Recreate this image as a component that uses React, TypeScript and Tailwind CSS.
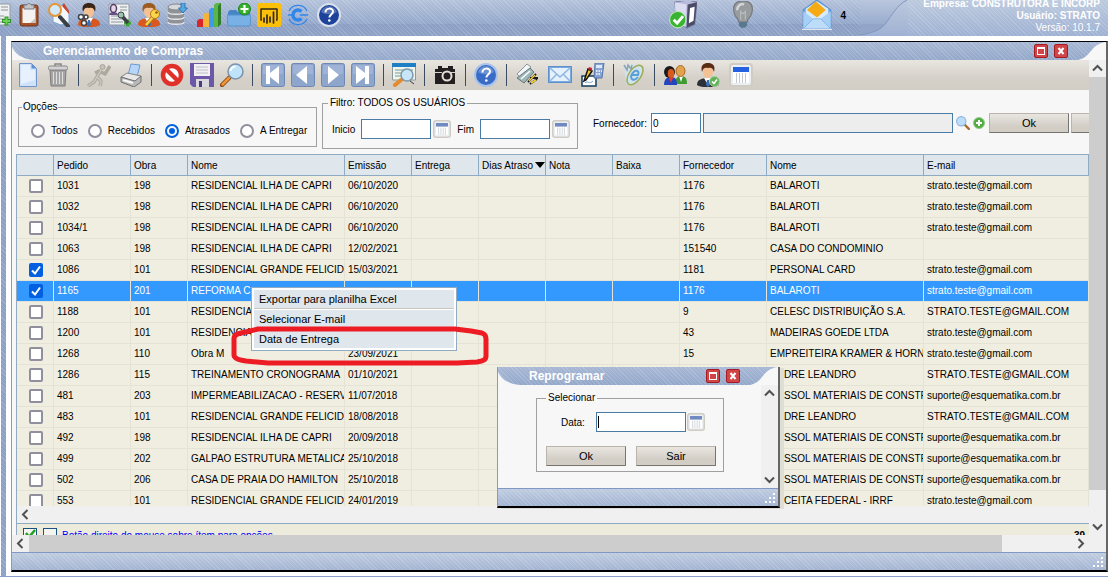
import type { ReactNode } from 'react';

const STRIPES =
  'bg-[repeating-linear-gradient(45deg,rgba(255,255,255,0.14)_0px,rgba(255,255,255,0.14)_1px,transparent_1px,transparent_3px)]';

interface IconProps {
  children: ReactNode;
  className?: string;
}

function Icon({ children, className = 'size-6' }: IconProps) {
  return (
    <svg viewBox="0 0 24 24" className={`block shrink-0 ${className}`} aria-hidden="true">
      {children}
    </svg>
  );
}

/* ---------- small pieces shared by several icons ---------- */

function Lens() {
  return (
    <>
      <path d="M9 15L2 22" stroke="#8a4a1c" strokeWidth="4.5" strokeLinecap="round" />
      <path d="M9 15L2.5 21.5" stroke="#f0953a" strokeWidth="2.5" strokeLinecap="round" />
      <circle cx="15.500" cy="8.500" r="7.500" fill="#bfe3f8" stroke="#7b93ad" strokeWidth="1.500" />
      <path d="M10.500 8a5 5 0 0 1 5-4.500" stroke="#fff" strokeWidth="2" fill="none" />
    </>
  );
}

function Person({ body = '#d9581f', hair = '#3a2418' }: { body?: string; hair?: string }) {
  return (
    <>
      <path d="M1 22c0-5 4-7 11-7s11 2 11 7c-4 3-18 3-22 0z" fill={body} />
      <path d="M8 15l4 7 4-7z" fill="#fff" />
      <path d="M11 17h2l1 5-2 2-2-2z" fill="#3b6fb5" />
      <ellipse cx="12" cy="8.500" rx="5" ry="6.500" fill="#f3c193" />
      <path d="M6 9C4 2 8 0 12 0s8 2 6 9c-1-4-3-5-6-4-3-1-5 0-6 4z" fill={hair} />
    </>
  );
}

function Page() {
  return (
    <>
      <path d="M2 1h20v21H2z" fill="#eff0f0" stroke="#8f9aa5" />
      <path d="M13 4h7M13 7h7M4 13h12M4 16h12M4 19h12" stroke="#8d969e" />
    </>
  );
}

function HelpIcon({ fill, ring }: { fill: string; ring: string }) {
  return (
    <Icon>
      <circle cx="12" cy="12" r="11" fill={fill} stroke={ring} strokeWidth="2" />
      <path d="M4 9a8.500 8.500 0 0 1 16 0c-4 3-12 3-16 0z" fill="#fff" opacity=".25" />
      <path d="M8.500 9.500c0-5 7.500-5 7.500-1 0 3-3.600 3-3.600 6" stroke="#fff" strokeWidth="2" fill="none" />
      <circle cx="12.300" cy="17.500" r="1.300" fill="#fff" />
    </Icon>
  );
}

function NavIcon({ d }: { d: string }) {
  return (
    <Icon>
      <rect x=".5" y=".5" width="23" height="23" rx="2" fill="#8ea6cc" stroke="#6d88b5" />
      <rect x="2" y="2" width="20" height="9" fill="#a9bcda" opacity=".6" />
      <path d={d} fill="#fff" />
    </Icon>
  );
}

function CalendarIcon({ blue = '#7089c0' }: { blue?: string }) {
  return (
    <Icon className="size-full">
      <rect x="1" y="1" width="22" height="22" rx="3" fill="#eceff2" stroke="#cfccc4" strokeWidth="2" />
      <rect x="4" y="4" width="16" height="5" fill={blue} />
      <path d="M4 9h16v11H4z" fill="#fff" />
      <path d="M7.500 10v10M10.500 10v10M13.500 10v10M16.500 10v10" stroke="#c3c9d2" />
    </Icon>
  );
}

/* ---------- top bar ---------- */

const topIcons: { name: string; icon: ReactNode }[] = [
  {
    name: 'Área de transferência',
    icon: (
      <Icon>
        <rect x="3" y="2" width="18" height="21" rx="2" fill="#a5532a" stroke="#71351a" />
        <path d="M5.500 5h13v15h-13z" fill="#f5f3f0" />
        <path d="M13 20l5.500-5v5z" fill="#c9c4bd" />
        <path d="M7 2h3c0-2 4-2 4 0h3v4H7z" fill="#c3c6c9" stroke="#777c82" />
      </Icon>
    ),
  },
  {
    name: 'Consultar obra',
    icon: (
      <Icon>
        <path d="M6 12L16 1l6 7v12l-8 2-8-3z" fill="#f4f8fc" stroke="#7aa5d4" />
        <path d="M15 3l2-3 5 8v3z" fill="#c8452f" />
        <path d="M13 14l8 9" stroke="#3a3f45" strokeWidth="4" strokeLinecap="round" />
        <circle cx="8" cy="7" r="6" fill="#cfe9fa" stroke="#e69538" strokeWidth="2" />
      </Icon>
    ),
  },
  {
    name: 'Configurar usuário',
    icon: (
      <Icon>
        <Person />
        <circle cx="4" cy="14" r="2.500" fill="#fff" stroke="#40444a" strokeWidth="1.500" />
        <circle cx="9" cy="14" r="2" fill="#fff" stroke="#40444a" strokeWidth="1.500" />
        <circle cx="7" cy="20" r="2.500" fill="#fff" stroke="#40444a" strokeWidth="1.500" />
      </Icon>
    ),
  },
  {
    name: 'Permissões',
    icon: (
      <Icon>
        <Page />
        <path d="M2 12c0-4 9-4 9 0z" fill="#6e4e8c" />
        <ellipse cx="6.500" cy="5.500" rx="3" ry="4" fill="#ead5e8" stroke="#514061" strokeWidth="1.500" />
        <path d="M17 20h7M20.500 16.500v7" stroke="#3fa535" strokeWidth="3" />
        <path d="M15 13l6 7" stroke="#3c4146" strokeWidth="3.500" />
        <circle cx="14" cy="12" r="3" fill="#9ec3ad" stroke="#3c4146" />
      </Icon>
    ),
  },
  {
    name: 'Senha',
    icon: (
      <Icon>
        <Person hair="#9b5a20" />
        <path d="M17 13l-8 9" stroke="#b87a10" strokeWidth="4" />
        <path d="M17 13l-8 9" stroke="#fbd44d" strokeWidth="2" />
        <circle cx="18" cy="11" r="4.500" fill="#fbd44d" stroke="#b87a10" />
        <circle cx="19.500" cy="9.500" r="1.300" fill="#8f600c" />
      </Icon>
    ),
  },
  {
    name: 'Banco de dados',
    icon: (
      <Icon>
        <path d="M1 4v15c0 4 16 4 16 0V4z" fill="#8f9296" />
        <path d="M1 9c0 3 16 3 16 0M1 14c0 3 16 3 16 0M1 19c0 3 16 3 16 0" stroke="#e7e8e9" strokeWidth="1.500" fill="none" />
        <ellipse cx="9" cy="4" rx="8" ry="3" fill="#d6d8da" stroke="#85888c" />
        <path d="M14 0h4v5h2.500L16 10l-4.500-5H14z" fill="#58a6e0" stroke="#2c78b8" />
      </Icon>
    ),
  },
  {
    name: 'Gráficos',
    icon: (
      <Icon>
        <path d="M0 18l2-2h5v8H0z" fill="#d9262c" />
        <path d="M6 12l2-2h5v14H6z" fill="#f6b23a" />
        <path d="M12 7l2-2h4v19h-6z" fill="#3f9be8" />
        <path d="M17 2l2-2h5v21l-3 3h-4z" fill="#5cb548" />
        <path d="M21 3l3-3v21l-3 3z" fill="#2f7d2a" />
      </Icon>
    ),
  },
  {
    name: 'Nova pasta',
    icon: (
      <Icon>
        <path d="M1 9l2-2h6l2 2h12v13H1z" fill="#4686c5" />
        <path d="M0 12h24l-1 11H1z" fill="#79b1e6" stroke="#5593ce" />
        <circle cx="17.500" cy="6" r="6" fill="#35b02c" stroke="#1f8220" />
        <path d="M13.500 6h8M17.500 2v8" stroke="#fff" strokeWidth="2.200" />
      </Icon>
    ),
  },
  {
    name: 'Power BI',
    icon: (
      <Icon>
        <rect width="24" height="24" rx="2" fill="#fcc00a" />
        <path d="M5 17H4V6h16v11h-1" fill="none" stroke="#2f2a1d" strokeWidth="1.500" strokeLinejoin="round" />
        <path d="M7 15v4M10 12v8M13 14v5M16.500 9v11" stroke="#2f2a1d" strokeWidth="1.700" strokeLinecap="round" />
      </Icon>
    ),
  },
  {
    name: 'Conexão',
    icon: (
      <Icon>
        <path d="M2 8a10 10 0 0 1 18 0M20 16a10 10 0 0 1-18 0" fill="none" stroke="#2f86ec" strokeWidth="1.200" />
        <path d="M14.500 8.500a5 5 0 1 0 0 7" fill="none" stroke="#2f86ec" strokeWidth="3.500" />
        <path d="M1 12h4M13 12h8" stroke="#2f86ec" strokeWidth="1.500" />
      </Icon>
    ),
  },
  { name: 'Ajuda', icon: <HelpIcon fill="#1c429a" ring="#dbe1ec" /> },
];

function TopBar() {
  return (
    <header className="flex h-9 shrink-0 overflow-hidden bg-[linear-gradient(#bccade,#9fb1d3)]">
      <div className="flex-1 bg-[linear-gradient(#b4c2da_0px,#93a7cb_24px,#8b9fc4_24px,#8ea2c6_36px)]">
        <div className={`flex h-full items-start pt-[3px] ${STRIPES}`}>
          <button aria-label="Novo documento" className="w-[11px] overflow-hidden">
            <Icon className="-ml-3 size-6">
              <Page />
              <path d="M14 18h9M18.500 13.500v9" stroke="#2f9330" strokeWidth="4" />
              <path d="M15 18h7M18.500 14.500v7" stroke="#71cf58" strokeWidth="2" />
            </Icon>
          </button>
          <div className="ml-1.5 flex flex-1 gap-1.5">
            {topIcons.map((item) => (
              <button key={item.name} aria-label={item.name}>
                {item.icon}
              </button>
            ))}
          </div>
          <div className="-mt-[3px] flex items-center">
            <button aria-label="Servidor" className="mr-8">
              <Icon className="size-7">
                <path d="M5 1l11-2 8 2-2 19-6 3-9-3z" fill="#b9bade" stroke="#7e80a6" />
                <path d="M5 1l10 2-1 19-8-3z" fill="#dcdcf1" />
                <path d="M16 3l8-2-2 19-7 3z" fill="#4b4d67" />
                <path d="M18 6l4-1-1 12-4 2z" fill="#fff" />
                <circle cx="7.500" cy="16" r="7" fill="#39b431" stroke="#b9e3b4" />
                <path d="M4 16l3 3 5-6" fill="none" stroke="#fff" strokeWidth="2.500" />
              </Icon>
            </button>
            <button aria-label="Dicas" className="mr-[45px]">
              <Icon className="size-7">
                <path d="M12 0c11 0 9 11 4 16v2H8v-2C3 11 1 0 12 0z" fill="#999c9f" stroke="#75797d" />
                <path d="M7 8c0-4 3-6 6-5" stroke="#d5d7d9" strokeWidth="2" fill="none" />
                <path d="M10 16V9l2 2 2-2v7" stroke="#b9bcbf" fill="none" />
                <path d="M8.500 18h7v3l-2 2h-3l-2-2z" fill="#57788d" />
              </Icon>
            </button>
            <button aria-label="Mensagens" className="flex items-center gap-2 font-bold">
              <Icon className="size-[30px]">
                <path d="M1 8l11-8 11 8v15H1z" fill="#74a9e3" stroke="#5a92d4" />
                <path d="M3 7l9-6 9 6v6l-9 4-9-4z" fill="#d9ebfa" />
                <path d="M4 8l7-7 8 7-7 6z" fill="#f6ab14" />
                <path d="M1 9l8 6-8 8zM23 9l-8 6 8 8z" fill="#a5cff6" />
                <path d="M1 23l8-8h6l8 8z" fill="#bcdcf8" stroke="#71a8e2" strokeWidth=".5" />
                <path d="M0 23.500h24" stroke="#e3e6ec" />
              </Icon>
              4
            </button>
            <span className="w-3.5" />
          </div>
        </div>
      </div>
      <svg viewBox="0 0 48 36" className="block h-9 w-12 shrink-0" aria-hidden="true">
        <defs>
          <linearGradient id="bar" x1="0" y1="0" x2="0" y2="1">
            <stop offset="0" stopColor="#bac6dd" />
            <stop offset=".66" stopColor="#9aadcf" />
            <stop offset=".67" stopColor="#91a5c8" />
            <stop offset="1" stopColor="#94a7ca" />
          </linearGradient>
        </defs>
        <path d="M0 36V0h47C37 5 32 15 26 23 20 31 11 33 0 35z" fill="url(#bar)" />
        <path d="M47 0C37 5 32 15 26 23 20 31 11 33 0 35" fill="none" stroke="#7f97c0" />
      </svg>
      <div className={`w-[200px] text-right text-white ${STRIPES}`}>
        <p className="-mt-0.5 pr-2 leading-3 font-bold whitespace-nowrap">Empresa: CONSTRUTORA E INCORP</p>
        <p className="pr-2 leading-3 font-bold">Usuário: STRATO</p>
        <p className="pr-2 leading-3">Versão: 10.1.7</p>
      </div>
    </header>
  );
}

/* ---------- window toolbar ---------- */

function Separator() {
  return <span className="mx-2 h-[22px] w-px bg-[#3b4a63]" />;
}

function Tool({ name, children }: { name: string; children: ReactNode }) {
  return (
    <button aria-label={name} className="size-6 shrink-0">
      {children}
    </button>
  );
}

function Toolbar() {
  return (
    <div className="flex h-[30px] shrink-0 items-center overflow-hidden bg-[linear-gradient(#e9e6e1,#d5d0c8_60%,#d2cdc5)] pl-1">
      <div className="flex gap-1.5">
        <Tool name="Novo">
          <Icon>
            <path d="M3.500.5h12l5 5v18h-17z" fill="#cfe2fa" stroke="#6f95cc" />
            <path d="M5 2h9v5h5v10L5 21z" fill="#e7f1fd" />
            <path d="M15.500.5v5h5z" fill="#5f8fd2" />
          </Icon>
        </Tool>
        <Tool name="Excluir">
          <Icon>
            <path d="M4 7h16l-1 16H5z" fill="#a5a5a5" stroke="#7c7c7c" />
            <path d="M7.500 9v12M10.500 9v12M13.500 9v12M16.500 9v12" stroke="#dedede" />
            <rect x="2.500" y="3" width="19" height="4" rx="1.500" fill="#d3d3d3" stroke="#888" />
            <path d="M9 3V1h6v2" fill="none" stroke="#888" strokeWidth="1.500" />
          </Icon>
        </Tool>
      </div>
      <Separator />
      <div className="flex gap-2">
        <Tool name="Executar">
          <Icon>
            <circle cx="15.500" cy="4" r="2.500" fill="#c6c1ba" stroke="#a8a39b" />
            <path d="M14 7l-4 7 4 4-1 5M10 14l-3 5-6 4M8 10l4-2 6 3 5-8" fill="none" stroke="#aea99f" strokeWidth="3.500" strokeLinejoin="round" />
            <path d="M14 7l-4 7 4 4-1 5M10 14l-3 5-6 4" fill="none" stroke="#cbc6bd" strokeWidth="1.500" />
          </Icon>
        </Tool>
        <Tool name="Imprimir">
          <Icon>
            <path d="M9 12L12 1l9 1-3 12z" fill="#b6d5f7" stroke="#6d9ad2" />
            <path d="M2 14l6-4 14 3-3 7z" fill="#e8e8e8" stroke="#848484" />
            <path d="M2 14l14 4 6-5v6l-7 5-13-5z" fill="#b9b9b9" stroke="#707070" />
            <path d="M4 17l10 3" stroke="#f8f8f8" strokeWidth="2" />
          </Icon>
        </Tool>
      </div>
      <Separator />
      <div className="flex gap-1.5">
        <Tool name="Cancelar">
          <Icon>
            <circle cx="12" cy="12" r="9" fill="#fff" stroke="#df3029" strokeWidth="4.500" />
            <path d="M6 6l12 12" stroke="#df3029" strokeWidth="4.500" />
          </Icon>
        </Tool>
        <Tool name="Salvar">
          <Icon>
            <path d="M0 0h24v24H3l-3-3z" fill="#6d58a8" />
            <path d="M4 1h16v12H4z" fill="#f1f1f4" />
            <path d="M6 4h12M6 7h12M6 10h12" stroke="#bcbcc6" />
            <path d="M6 16h13v8H6z" fill="#d8d8de" />
            <path d="M9 18h3v6H9z" fill="#4c3a82" />
          </Icon>
        </Tool>
        <Tool name="Pesquisar">
          <Icon>
            <Lens />
          </Icon>
        </Tool>
      </div>
      <Separator />
      <div className="flex gap-1.5">
        <Tool name="Primeiro">
          <NavIcon d="M5 3h4v7l9-7v18l-9-7v7H5z" />
        </Tool>
        <Tool name="Anterior">
          <NavIcon d="M16 3v18L5 12z" />
        </Tool>
        <Tool name="Próximo">
          <NavIcon d="M7 3v18l11-9z" />
        </Tool>
        <Tool name="Último">
          <NavIcon d="M5 3l9 7V3h4v18h-4v-7l-9 7z" />
        </Tool>
      </div>
      <Separator />
      <Tool name="Visualizar">
        <Icon>
          <path d="M.5 1h23v16H.5z" fill="#eef5ee" stroke="#8b9a98" />
          <path d="M0 0h24v4H0z" fill="#1f7fc4" />
          <path d="M3 7h18M3 10h18M3 13h18" stroke="#7a9a91" />
          <path d="M9 17l-6 5" stroke="#e58a2c" strokeWidth="4" strokeLinecap="round" />
          <circle cx="15" cy="12" r="6" fill="#c8e6f7" stroke="#7c98aa" strokeWidth="1.500" />
          <path d="M18 18l4 3" stroke="#2b3f4c" />
        </Icon>
      </Tool>
      <Separator />
      <Tool name="Câmera">
        <Icon>
          <path d="M2 6h3V3h4v2h6V3h5v3h2v15H2z" fill="#231f20" />
          <path d="M2 9.500h7M17 9.500h5" stroke="#d8d3cb" />
          <circle cx="14" cy="13" r="4.500" fill="#231f20" stroke="#e4dfd8" strokeWidth="2" />
        </Icon>
      </Tool>
      <Separator />
      <Tool name="Ajuda da tela">
        <HelpIcon fill="#386cc6" ring="#a9c3ea" />
      </Tool>
      <Separator />
      <div className="flex gap-[9px]">
        <Tool name="Digitalizar">
          <Icon>
            <path d="M2 11L12 1l4 3L6 15z" fill="#f2f6f7" stroke="#8d9799" />
            <path d="M2 15l13-10 4 4-10 11z" fill="#9fb6b8" stroke="#66777a" />
            <path d="M6 16l9-8" stroke="#fff" strokeWidth="1.500" />
            <path d="M13 19l8-8M15 15h8M15 21l7-5" stroke="#1b1b1b" strokeWidth="2" />
            <path d="M14 18l6-6M16 20l5-3" stroke="#f2cf32" strokeWidth="1.500" />
          </Icon>
        </Tool>
        <Tool name="E-mail">
          <Icon>
            <rect x=".5" y="3.500" width="23" height="16" fill="#7dabe0" stroke="#5d8fcf" />
            <path d="M2 5h20v13H2z" fill="#e4f1fc" />
            <path d="M2 5l10 9 10-9M2 18l7-7M22 18l-7-7" fill="none" stroke="#90b5e0" strokeWidth="1.500" />
          </Icon>
        </Tool>
        <Tool name="Calcular">
          <Icon>
            <path d="M1 13h14v10H1z" fill="#fff" stroke="#123c5c" strokeWidth="1.500" />
            <path d="M4 20c3-3 4 2 8-2" stroke="#78a2c6" fill="none" />
            <path d="M14 0h9l-2 15h-8z" fill="#87a4d3" stroke="#5874a8" />
            <path d="M15 2h6v3h-6z" fill="#dcebfa" />
            <path d="M15 8h6M15 11h5" stroke="#fff" strokeWidth="1.500" strokeDasharray="1.500 1" />
            <path d="M3 18L7 6l4 2-6 9z" fill="#f3c92d" stroke="#111" strokeWidth="1.500" />
            <path d="M7 6l1-2 3 1v3z" fill="#c9252c" />
          </Icon>
        </Tool>
      </div>
      <Separator />
      <Tool name="Nota fiscal eletrônica">
        <Icon>
          <path d="M2 3l9-2 12 4-6 11-9 7-4-3z" fill="#d0e2ed" />
          <path d="M2 2l3 5 1-5 3 4 1-4" fill="none" stroke="#8fa3ad" strokeWidth="1.500" />
          <path d="M16 14c-4 5-9 2-6-3s8-4 6 1h-6" fill="none" stroke="#5aa0d8" strokeWidth="2" />
          <ellipse cx="13" cy="12" rx="6" ry="11" transform="rotate(35 13 12)" fill="none" stroke="#9bad55" strokeWidth="1.500" />
        </Icon>
      </Tool>
      <Separator />
      <div className="flex gap-[9px]">
        <Tool name="Usuários">
          <Icon>
            <path d="M12 21c0-5 2-8 6-8s6 2 6 8z" fill="#3e9b32" />
            <path d="M16 13l2 6 2-6z" fill="#fff" />
            <ellipse cx="17.500" cy="8" rx="4.500" ry="5.500" fill="#e3a24f" stroke="#a9691f" />
            <path d="M1 22c0-6 3-8 7-8s6 2 6 8z" fill="#2545c0" />
            <path d="M6 15l2 5 2-5z" fill="#e63a2f" />
            <ellipse cx="6.500" cy="9" rx="5.500" ry="6" fill="#1c1a1a" />
            <ellipse cx="8" cy="10.500" rx="3.300" ry="4.500" fill="#dc5a1b" />
          </Icon>
        </Tool>
        <Tool name="Aprovador">
          <Icon>
            <Person body="#2c3038" hair="#5a2c15" />
            <circle cx="18.500" cy="18.500" r="5" fill="#62b156" stroke="#a7d3a0" />
            <path d="M16 18.500l2 2 3-4" stroke="#fff" strokeWidth="1.500" fill="none" />
          </Icon>
        </Tool>
        <Tool name="Agenda">
          <CalendarIcon blue="#2460e0" />
        </Tool>
      </div>
    </div>
  );
}

/* ---------- window chrome ---------- */

function TitleBar({ title }: { title: string }) {
  return (
    <div className="shrink-0 bg-[linear-gradient(#a7b7d4,#93a8ca)]">
      <div className={`flex h-[18px] items-center ${STRIPES}`}>
        <svg viewBox="0 0 31 18" className="block h-full w-[31px] shrink-0" aria-hidden="true">
          <path d="M0 5c3 6 9 12 22 13H0z" fill="#f7f7f7" />
        </svg>
        <h2 className="flex-1 text-xs font-bold text-white">{title}</h2>
        <button aria-label="Maximizar" className="mr-1.5 grid size-3.5 place-items-center rounded-xs border border-[#a51b1f] bg-[#cf4548]">
          <span className="h-2 w-2 border border-t-2 border-white" />
        </button>
        <button aria-label="Fechar" className="mr-2.5 grid size-3.5 place-items-center rounded-xs border border-[#a51b1f] bg-[#cf4548]">
          <svg viewBox="0 0 8 8" className="block size-2" aria-hidden="true">
            <path d="M1.500 1l5 6M6.500 1l-5 6" stroke="#fff" strokeWidth="2" />
          </svg>
        </button>
        <svg viewBox="0 0 28 18" className="block h-full w-7 shrink-0" aria-hidden="true">
          <path d="M28 0C12 2 14 15 0 18h28z" fill="#f7f7f7" />
        </svg>
      </div>
    </div>
  );
}

function StatusBar() {
  return (
    <div className="shrink-0 border-t border-[#7f98c4] bg-[linear-gradient(#bfcce0,#a3b4d2)]">
      <div className={`flex h-[17px] items-end justify-end p-0.5 ${STRIPES}`}>
        <svg viewBox="0 0 11 11" className="block size-[11px]" aria-hidden="true">
          <path d="M8 0h2v2H8zM4 4h2v2H4zM8 4h2v2H8zM0 8h2v2H0zM4 8h2v2H4zM8 8h2v2H8z" fill="#fff" />
        </svg>
      </div>
    </div>
  );
}

const arrowPaths = {
  up: 'M4 10.500l4.500-4.500 4.500 4.500',
  down: 'M4 6.500l4.500 4.500 4.500-4.500',
  left: 'M10.500 4L6 8.500l4.500 4.500',
  right: 'M6.500 4l4.500 4.500L6.500 13',
};

function Arrow({ dir }: { dir: keyof typeof arrowPaths }) {
  return (
    <button aria-label={dir} className="size-[17px] shrink-0 bg-[#f0f0f0]">
      <svg viewBox="0 0 17 17" className="block size-full" aria-hidden="true">
        <path d={arrowPaths[dir]} fill="none" stroke="#505050" strokeWidth="2" />
      </svg>
    </button>
  );
}

/* ---------- filters ---------- */

const options = ['Todos', 'Recebidos', 'Atrasados', 'A Entregar'];

function DateField({ id, label }: { id: string; label: string }) {
  return (
    <>
      <label htmlFor={id}>{label}</label>
      <input id={id} type="text" className="ml-1.5 h-5 w-[70px] shrink-0 border border-[#4a7ba5] bg-white px-0.5" />
      <button aria-label={`Calendário ${label}`} className="ml-0.5 size-[18px] shrink-0">
        <CalendarIcon />
      </button>
    </>
  );
}

const buttonStyle =
  'h-5 border border-[#b9b5ad] border-r-[#77746f] border-b-[#77746f] bg-[linear-gradient(#e9e6e1,#d2cdc5_70%)] text-[11px] leading-none';

function Filters() {
  return (
    <div className="flex shrink-0 items-start overflow-hidden pt-1.5 pb-[5px] pl-1.5">
      <fieldset className="mt-1 h-[47px] w-[299px] min-w-0 shrink-0 border border-[#a0a0a0] pl-3">
        <legend className="-ml-[9px] px-px leading-[14px]">Opções</legend>
        <div className="flex items-center gap-2.5 pt-[9px]">
          {options.map((option) => (
            <label key={option} className="flex items-center gap-1.5 whitespace-nowrap">
              <input
                type="radio"
                name="opcoes"
                defaultChecked={option === 'Atrasados'}
                className="size-3.5 appearance-none rounded-full border-2 border-[#8f8f9d] bg-white checked:border-[#0060df] checked:bg-[#0060df] checked:bg-clip-content checked:p-0.5"
              />
              {option}
            </label>
          ))}
        </div>
      </fieldset>
      <fieldset className="ml-[5px] h-[53px] w-[256px] min-w-0 shrink-0 border border-[#a0a0a0] pl-[9px]">
        <legend className="-ml-1 px-0.5 leading-[14px]">Filtro: TODOS OS USUÁRIOS</legend>
        <div className="flex items-center pt-[9px]">
          <DateField id="inicio" label="Inicio" />
          <span className="w-1.5" />
          <DateField id="fim" label="Fim" />
        </div>
      </fieldset>
      <div className="mt-[17px] ml-[15px] flex flex-1 items-center">
        <label htmlFor="fornecedor">Fornecedor:</label>
        <input id="fornecedor" type="text" defaultValue="0" className="ml-1 h-5 w-[50px] shrink-0 border border-[#4a7ba5] bg-white px-px" />
        <input type="text" readOnly aria-label="Nome do fornecedor" className="ml-0.5 h-5 w-[250px] min-w-0 border border-[#4a7ba5] bg-[#ededed]" />
        <button aria-label="Buscar fornecedor" className="ml-[3px]">
          <Icon className="size-3.5">
            <path d="M15 15l7 7" stroke="#a96a2b" strokeWidth="4" strokeLinecap="round" />
            <circle cx="9" cy="9" r="8" fill="#bcdcf8" stroke="#8fb7e6" strokeWidth="2" />
          </Icon>
        </button>
        <button aria-label="Adicionar fornecedor" className="ml-[3px]">
          <Icon className="size-3">
            <circle cx="12" cy="12" r="11" fill="#4fad3f" stroke="#96c98c" strokeWidth="2" />
            <path d="M6 12h12M12 6v12" stroke="#fff" strokeWidth="4" />
          </Icon>
        </button>
        <button className={`ml-1 w-20 shrink-0 ${buttonStyle}`}>Ok</button>
        <button aria-label="Sair" className={`ml-0.5 w-20 shrink-0 ${buttonStyle}`} />
      </div>
    </div>
  );
}

/* ---------- grid ---------- */

interface Order {
  pedido: string;
  obra: string;
  nome: string;
  emissao: string;
  fornecedor: string;
  fornecedorNome: string;
  email: string;
  checked?: boolean;
  selected?: boolean;
}

const CAPRI = 'RESIDENCIAL ILHA DE CAPRI';
const GRANDE = 'RESIDENCIAL GRANDE FELICIDADE';
const CASSOL = 'CASSOL MATERIAIS DE CONSTRUCAO';
const GMAIL = 'strato.teste@gmail.com';
const SUPORTE = 'suporte@esquematika.com.br';

const orders: Order[] = [
  { pedido: '1031', obra: '198', nome: CAPRI, emissao: '06/10/2020', fornecedor: '1176', fornecedorNome: 'BALAROTI', email: GMAIL },
  { pedido: '1032', obra: '198', nome: CAPRI, emissao: '06/10/2020', fornecedor: '1176', fornecedorNome: 'BALAROTI', email: GMAIL },
  { pedido: '1034/1', obra: '198', nome: CAPRI, emissao: '06/10/2020', fornecedor: '1176', fornecedorNome: 'BALAROTI', email: GMAIL },
  { pedido: '1063', obra: '198', nome: CAPRI, emissao: '12/02/2021', fornecedor: '151540', fornecedorNome: 'CASA DO CONDOMINIO', email: '' },
  { pedido: '1086', obra: '101', nome: GRANDE, emissao: '15/03/2021', fornecedor: '1181', fornecedorNome: 'PERSONAL CARD', email: GMAIL, checked: true },
  { pedido: '1165', obra: '201', nome: 'REFORMA C', emissao: '', fornecedor: '1176', fornecedorNome: 'BALAROTI', email: GMAIL, checked: true, selected: true },
  { pedido: '1188', obra: '101', nome: 'RESIDENCIAL', emissao: '', fornecedor: '9', fornecedorNome: 'CELESC DISTRIBUIÇÃO S.A.', email: 'STRATO.TESTE@GMAIL.COM' },
  { pedido: '1200', obra: '101', nome: 'RESIDENCIAL', emissao: '', fornecedor: '43', fornecedorNome: 'MADEIRAS GOEDE LTDA', email: GMAIL },
  { pedido: '1268', obra: '110', nome: 'Obra M', emissao: '23/09/2021', fornecedor: '15', fornecedorNome: 'EMPREITEIRA KRAMER & HORN', email: GMAIL },
  { pedido: '1286', obra: '115', nome: 'TREINAMENTO CRONOGRAMA', emissao: '01/10/2021', fornecedor: '', fornecedorNome: 'ANDRE LEANDRO', email: 'STRATO.TESTE@GMAIL.COM' },
  { pedido: '481', obra: '203', nome: 'IMPERMEABILIZACAO - RESERVATORIO', emissao: '11/07/2018', fornecedor: '', fornecedorNome: CASSOL, email: SUPORTE },
  { pedido: '483', obra: '101', nome: GRANDE, emissao: '18/08/2018', fornecedor: '', fornecedorNome: 'ANDRE LEANDRO', email: 'STRATO.TESTE@GMAIL.COM' },
  { pedido: '492', obra: '198', nome: CAPRI, emissao: '20/09/2018', fornecedor: '', fornecedorNome: CASSOL, email: SUPORTE },
  { pedido: '499', obra: '202', nome: 'GALPAO ESTRUTURA METALICA', emissao: '25/10/2018', fornecedor: '', fornecedorNome: CASSOL, email: SUPORTE },
  { pedido: '502', obra: '206', nome: 'CASA DE PRAIA DO HAMILTON', emissao: '25/10/2018', fornecedor: '', fornecedorNome: CASSOL, email: SUPORTE },
  { pedido: '553', obra: '101', nome: GRANDE, emissao: '24/01/2019', fornecedor: '', fornecedorNome: 'RECEITA FEDERAL - IRRF', email: GMAIL },
];

const columns = [
  { title: 'Pedido', width: 'w-[77px]' },
  { title: 'Obra', width: 'w-[57px]' },
  { title: 'Nome', width: 'w-[157px]' },
  { title: 'Emissão', width: 'w-[67px]' },
  { title: 'Entrega', width: 'w-[67px]' },
  { title: 'Dias Atraso', width: 'w-[67px]', sorted: true },
  { title: 'Nota', width: 'w-[67px]' },
  { title: 'Baixa', width: 'w-[67px]' },
  { title: 'Fornecedor', width: 'w-[87px]' },
  { title: 'Nome', width: 'w-[157px]' },
  { title: 'E-mail', width: '' },
];

function OrderRow({ order }: { order: Order }) {
  const cells = [
    order.pedido,
    order.obra,
    order.nome,
    order.emissao,
    '',
    '',
    '',
    '',
    order.fornecedor,
    order.fornecedorNome,
    order.email,
  ];
  return (
    <tr className={order.selected ? 'h-[21px] bg-[#3399ff] text-white' : 'h-[21px] bg-[#f0eee1]'}>
      <td className="border-r border-b border-[#e5e3d6] p-0">
        <span className="relative ml-3 block size-3.5">
          <input
            type="checkbox"
            aria-label={`Pedido ${order.pedido}`}
            defaultChecked={order.checked}
            className="peer block size-3.5 appearance-none rounded-xs border-2 border-[#8f8f9d] bg-white checked:border-[#0060df] checked:bg-[#0060df]"
          />
          <svg viewBox="0 0 14 14" className="pointer-events-none absolute inset-0 hidden peer-checked:block" aria-hidden="true">
            <path d="M3 7.500l3 3 5-7" fill="none" stroke="#fff" strokeWidth="2" />
          </svg>
        </span>
      </td>
      {cells.map((cell, i) => (
        <td
          key={i}
          className="overflow-hidden border-r border-b border-[#e5e3d6] pt-0 pr-0 pb-0.5 pl-[3px] whitespace-nowrap"
        >
          {cell}
        </td>
      ))}
    </tr>
  );
}

function OrdersGrid() {
  return (
    <div className="min-h-0 flex-1 overflow-hidden">
      <table className="w-full table-fixed border-separate border-spacing-0">
        <thead>
          <tr className="h-[22px] bg-[#dfe6ec]">
            <th className="w-[37px] border-y border-r border-[#8fabc4] p-0" aria-label="Marcar" />
            {columns.map((column, i) => (
              <th
                key={i}
                className={`border-y border-r border-[#8fabc4] py-0 pr-0 pl-[3px] text-left font-normal whitespace-nowrap ${column.width}`}
              >
                <span className="flex items-center gap-0.5">
                  {column.title}
                  {column.sorted && (
                    <svg viewBox="0 0 10 6" className="h-1.5 w-2.5 shrink-0" aria-hidden="true">
                      <path d="M0 0h10L5 6z" />
                    </svg>
                  )}
                </span>
              </th>
            ))}
          </tr>
        </thead>
        <tbody>
          {orders.map((order) => (
            <OrderRow key={order.pedido} order={order} />
          ))}
        </tbody>
      </table>
    </div>
  );
}

function GridFooter() {
  return (
    <div className="flex h-3 shrink-0 items-start overflow-hidden border-t border-[#8fabc4] bg-[#ecebdc] pt-1 pl-1.5">
      <button aria-label="Marcar todos" className="size-3.5 border border-[#1c5180] bg-[#f4f4f0]">
        <svg viewBox="0 0 12 12" className="block" aria-hidden="true">
          <path d="M2 4l3 4 6-7" fill="none" stroke="#21a121" strokeWidth="2.500" />
        </svg>
      </button>
      <button aria-label="Desmarcar todos" className="ml-1.5 size-3.5 border border-[#1c5180] bg-[#f4f4f0]" />
      <p className="ml-[5px] flex-1 leading-4 text-[#0000ff]">Botão direito do mouse sobre ítem para opções</p>
      <p className="pr-1 leading-4 font-bold">39</p>
    </div>
  );
}

/* ---------- floating pieces ---------- */

function ContextMenu() {
  return (
    <ul className="absolute top-[287px] left-[251px] flex w-[206px] flex-col gap-0.5 border border-[#93abc0] bg-white p-0.5 text-[11px]">
      {['Exportar para planilha Excel', 'Selecionar E-mail', 'Data de Entrega'].map((item) => (
        <li key={item} className="first:shadow-[0_1px_0_#c9c5bd]">
          <button className="block h-[18px] w-full bg-[#dfe6ec] px-[5px] text-left">{item}</button>
        </li>
      ))}
    </ul>
  );
}

function Highlight() {
  return (
    <svg viewBox="0 0 260 44" className="pointer-events-none absolute top-[325px] left-[230px] h-11 w-[260px]" aria-hidden="true">
      <path
        d="M28 4h197l16 2 11 2c3 1 4 3 4 6v17c0 4-3 5-9 6l-20 1H38l-22-2c-8-1-12-3-12-6V14c0-4 3-5 7-6l9-2z"
        fill="none"
        stroke="#ed1c24"
        strokeWidth="5"
        strokeLinejoin="round"
      />
    </svg>
  );
}

function RescheduleDialog() {
  return (
    <div
      role="dialog"
      aria-label="Reprogramar"
      className="absolute top-[367px] left-[497px] flex w-[283px] flex-col border-r-2 border-b-2 border-l border-r-[#666] border-b-black border-l-[#999] bg-[#f7f7f7] shadow-[4px_1px_0_#deded6]"
    >
      <TitleBar title="Reprogramar" />
      <div className="flex">
        <div className="flex-1 pt-1.5 pr-[37px] pb-4 pl-[38px]">
          <fieldset className="h-[81px] min-w-0 border border-[#a0a0a0] pl-[9px]">
            <legend className="px-0.5 leading-[14px]">Selecionar</legend>
            <div className="flex items-center pt-[7px] pl-[15px]">
              <label htmlFor="data" className="w-[35px]">
                Data:
              </label>
              <span className="relative">
                <input id="data" type="text" className="block h-5 w-[90px] border border-[#4a7ba5] bg-white px-1" />
                <span className="absolute top-1 left-0.5 h-3 w-px bg-black" />
              </span>
              <button aria-label="Calendário" className="ml-px size-[18px]">
                <CalendarIcon />
              </button>
            </div>
            <div className="mt-3.5 flex gap-2.5">
              <button className={`w-20 shrink-0 ${buttonStyle}`}>Ok</button>
              <button className={`w-20 shrink-0 ${buttonStyle}`}>Sair</button>
            </div>
          </fieldset>
        </div>
        <div className="flex w-[17px] shrink-0 flex-col justify-between bg-[#f0f0f0]">
          <Arrow dir="up" />
          <Arrow dir="down" />
        </div>
      </div>
      <StatusBar />
    </div>
  );
}

export default function App() {
  return (
    <div className="relative flex h-screen flex-col overflow-hidden border-b border-[#8aa0c8] bg-white font-['Liberation_Sans',Arial,sans-serif] text-[10px] text-black">
      <TopBar />
      <div className="flex min-h-0 flex-1 pl-px">
        <div className="w-[5px] shrink-0 bg-[#8ba1c8]">
          <div className={`h-full ${STRIPES}`} />
        </div>
        <main className="mt-[5px] mb-1 ml-[5px] flex min-w-0 flex-1 flex-col border-t border-r-2 border-b-2 border-l border-t-black border-r-[#666] border-b-black border-l-[#999] bg-[#f7f7f7]">
          <TitleBar title="Gerenciamento de Compras" />
          <div className="flex min-h-0 flex-1">
            <div className="flex min-w-0 flex-1 flex-col">
              <Toolbar />
              <Filters />
              <div className="ml-1 flex min-h-0 flex-1 flex-col border-l border-[#8fabc4]">
                <OrdersGrid />
                <div className="flex shrink-0 bg-[#f0f0f0]">
                  <Arrow dir="left" />
                </div>
                <GridFooter />
              </div>
            </div>
            <div className="flex w-[17px] shrink-0 flex-col bg-[#f0f0f0]">
              <Arrow dir="up" />
              <div className="flex-1 bg-[#cdcdcd]" />
              <div className="flex h-[45px] items-end">
                <Arrow dir="down" />
              </div>
            </div>
          </div>
          <div className="flex shrink-0 bg-[#f0f0f0] pr-[17px]">
            <Arrow dir="left" />
            <div className="flex-1 bg-[#cdcdcd]" />
            <div className="flex w-[87px] justify-end">
              <Arrow dir="right" />
            </div>
          </div>
          <StatusBar />
        </main>
      </div>
      <ContextMenu />
      <Highlight />
      <RescheduleDialog />
    </div>
  );
}
